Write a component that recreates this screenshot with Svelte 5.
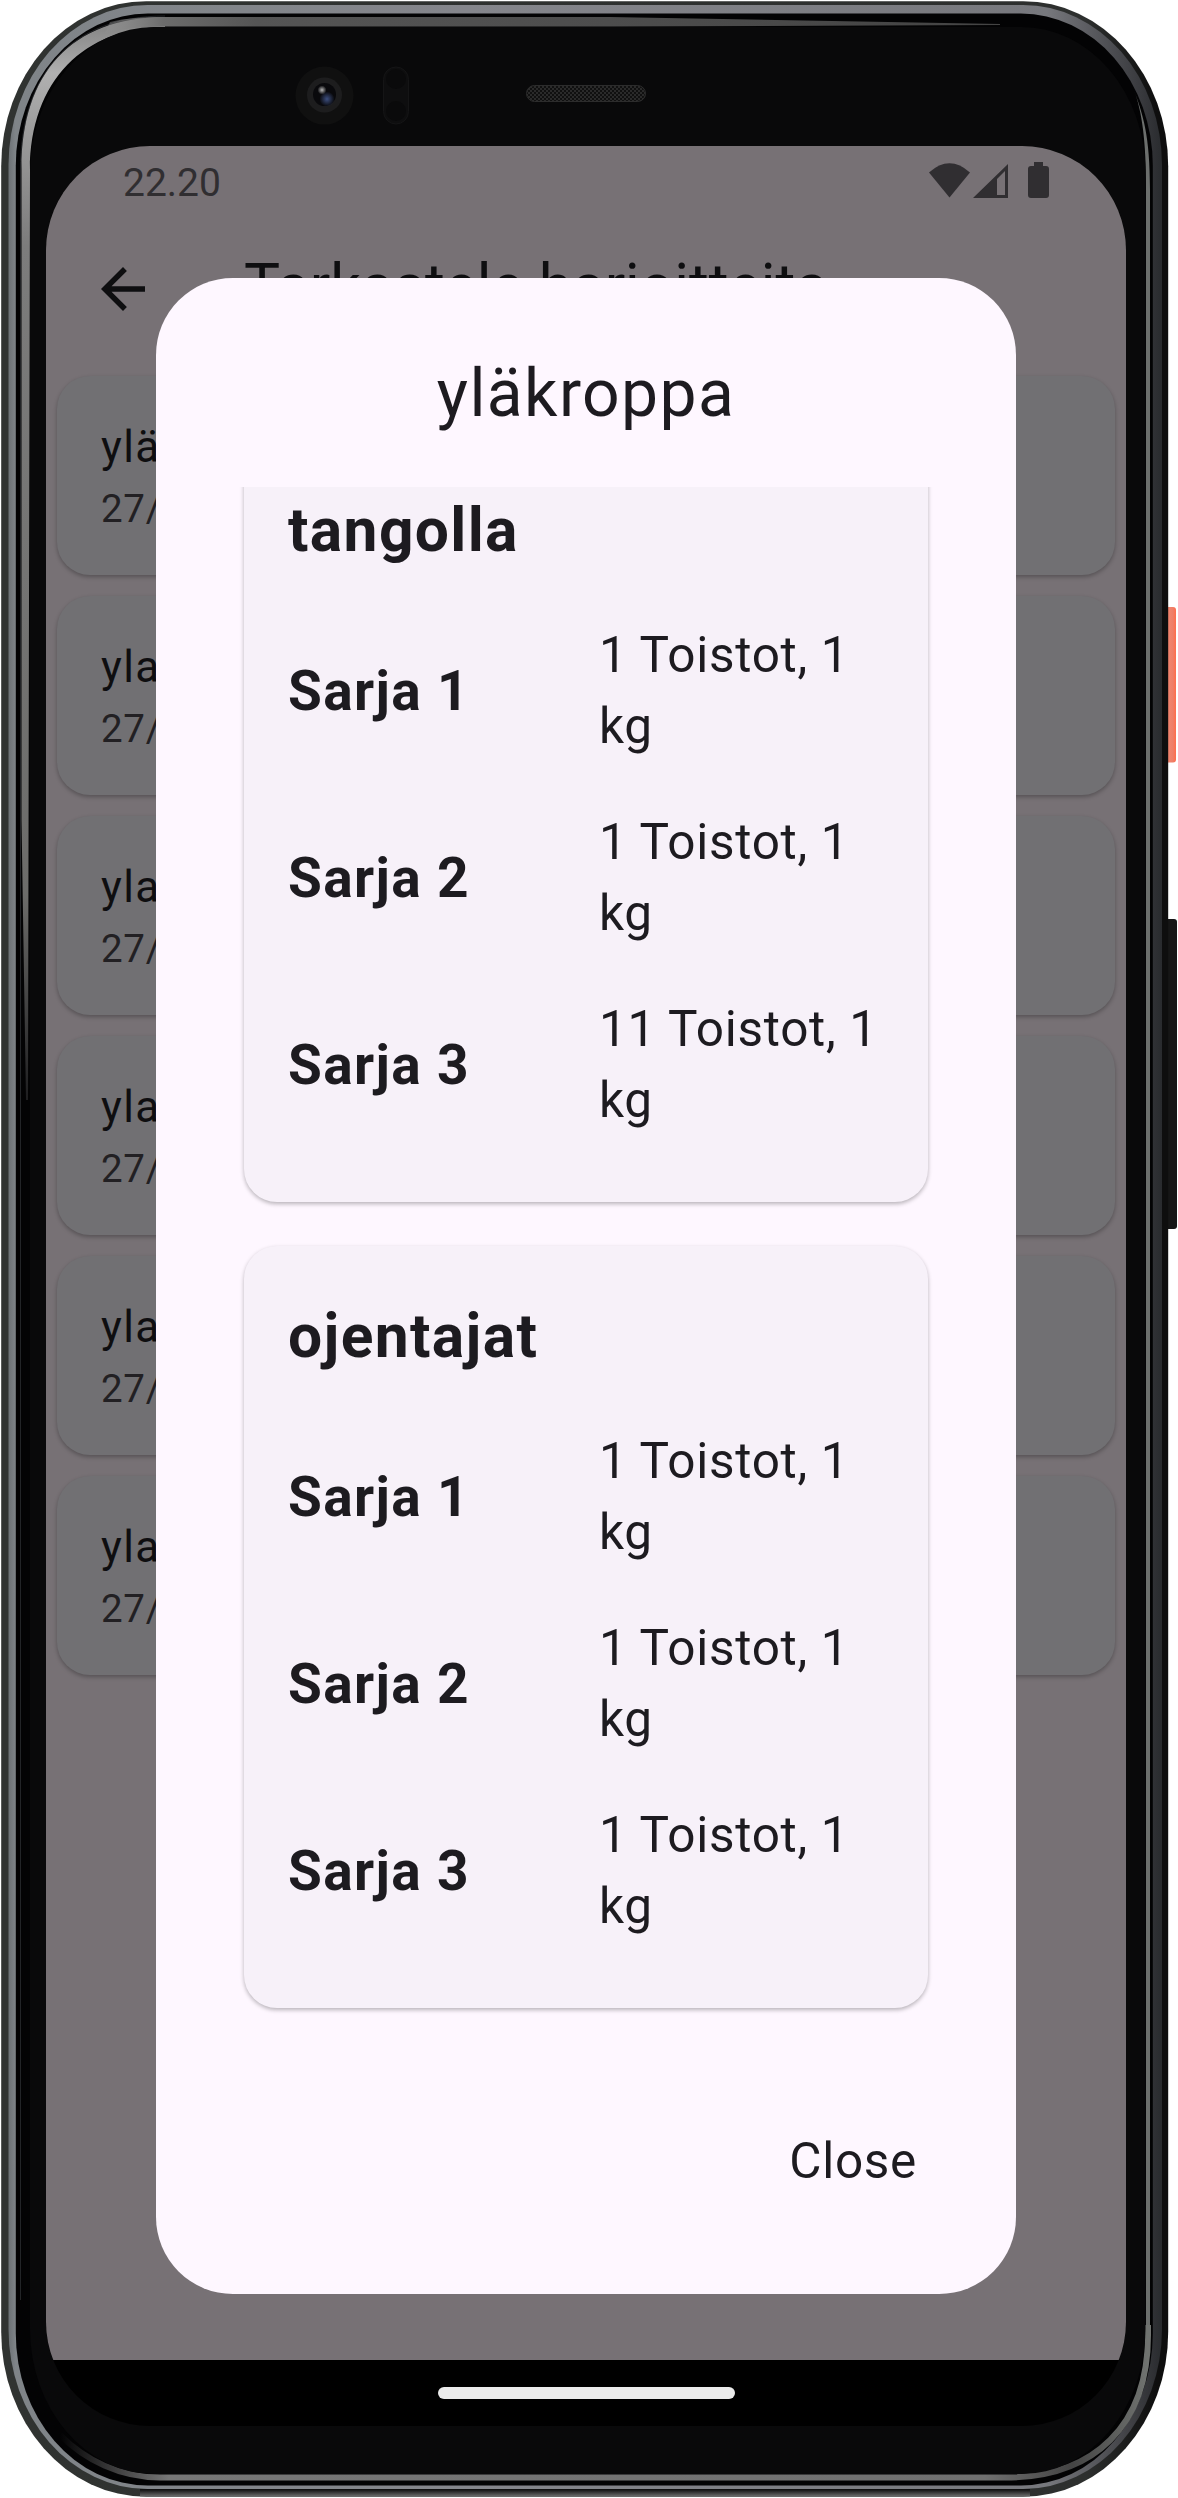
<script>
  const workouts = ['yläkroppa', 'ylakroppa', 'ylakroppa', 'ylakroppa', 'ylakroppa', 'ylakroppa'];
  const exercises = [
    { name: 'tangolla', sets: ['1 Toistot, 1 kg', '1 Toistot, 1 kg', '11 Toistot, 1 kg'] },
    { name: 'ojentajat', sets: ['1 Toistot, 1 kg', '1 Toistot, 1 kg', '1 Toistot, 1 kg'] }
  ];
</script>

<div class="device">
  <svg class="frame" viewBox="0 0 1178 2498" aria-hidden="true">
    <defs>
      <linearGradient id="body" x1="0" y1="0" x2="1" y2="0">
        <stop offset="0" stop-color="#303331" />
        <stop offset=".93" stop-color="#2d2f2e" />
        <stop offset=".99" stop-color="#0e0e0e" />
      </linearGradient>
      <linearGradient id="rail" x1="0" y1="0" x2="1" y2="0">
        <stop offset="0" stop-color="#6c7175" />
        <stop offset=".006" stop-color="#7f8488" />
        <stop offset=".4" stop-color="#85868c" />
        <stop offset=".9" stop-color="#77787d" />
        <stop offset=".98" stop-color="#3a3b3f" />
        <stop offset="1" stop-color="#292b2e" />
      </linearGradient>
      <linearGradient id="shineLeft" gradientUnits="userSpaceOnUse" x1="0" y1="30" x2="0" y2="1110">
        <stop offset="0" stop-color="#8a8a8a" />
        <stop offset=".04" stop-color="#b0b0b0" />
        <stop offset=".1" stop-color="#9a9a9a" />
        <stop offset=".2" stop-color="#7c7c7c" />
        <stop offset=".8" stop-color="#6c6c6a" />
        <stop offset="1" stop-color="#1a1a1c" />
      </linearGradient>
      <linearGradient id="shineTop" gradientUnits="userSpaceOnUse" x1="70" y1="0" x2="1000" y2="0">
        <stop offset="0" stop-color="#aaa" stop-opacity="0" />
        <stop offset=".1" stop-color="#6c6c6c" />
        <stop offset=".2" stop-color="#555" />
        <stop offset="1" stop-color="#444" />
      </linearGradient>
      <linearGradient id="shineBottom" gradientUnits="userSpaceOnUse" x1="60" y1="0" x2="1148" y2="0">
        <stop offset="0" stop-color="#777" stop-opacity="0" />
        <stop offset=".1" stop-color="#777" />
        <stop offset=".85" stop-color="#707070" />
        <stop offset=".93" stop-color="#444" />
        <stop offset="1" stop-color="#707370" />
      </linearGradient>
      <linearGradient id="lip" x1="0" y1="0" x2="0" y2="1">
        <stop offset="0" stop-color="#0a0a0a" />
        <stop offset="1" stop-color="#6e6e6e" />
      </linearGradient>
      <linearGradient id="power" x1="0" y1="0" x2="1" y2="0">
        <stop offset="0" stop-color="#e4694f" />
        <stop offset=".4" stop-color="#f5866f" />
        <stop offset=".8" stop-color="#ee7f68" />
        <stop offset="1" stop-color="#ff6d4c" />
      </linearGradient>
      <radialGradient id="glint"><stop offset="0" stop-color="#b5b5b5" /><stop offset="1" stop-color="#b5b5b5" stop-opacity="0" /></radialGradient>
      <radialGradient id="lens"><stop offset="0" stop-color="#3d4f80" /><stop offset="1" stop-color="#3d4f80" stop-opacity="0" /></radialGradient>
      <pattern id="mesh" width="4" height="4" patternUnits="userSpaceOnUse">
        <rect width="4" height="4" fill="#101010" />
        <circle cx="1" cy="1" r=".8" fill="#4a4a4a" />
        <circle cx="3" cy="3" r=".8" fill="#4a4a4a" />
      </pattern>
    </defs>
    <rect x="1160" y="607" width="16" height="155.500" rx="3" fill="url(#power)" />
    <rect x="1160" y="919" width="17" height="310" rx="3" fill="#161616" />
    <rect x="1.2" y="1.2" width="1167" height="2495.500" rx="145" ry="165" fill="url(#body)" />
    <rect x="140" y="2489" width="890" height="7.500" fill="url(#lip)" />
    <rect x="8.500" y="5" width="1153.500" height="2484" rx="139" ry="160" fill="url(#rail)" />
    <rect x="15.800" y="13.500" width="1137" height="2472" rx="132" ry="152" fill="#030304" />
    <path d="M20.500 2300V170C20.500 75 70 16 165 16" fill="none" stroke="#222427" />
    <path d="M26 1100L21.500 820V170C21 75 70 17 165 17V27C85 27 30 80 30 170L29 600L28 1100Z" fill="url(#shineLeft)" />
    <path d="M110 22C125 18 145 17 165 17H610L1000 24V25L610 26.500H165C140 27 125 28 105 33Z" fill="url(#shineTop)" />
    <path d="M1134 90C1143 115 1150 135 1150 190V2330H1146V190C1146 140 1142 112 1134 90Z" fill="#6c6f6d" />
    <path d="M1148 2325V2335C1148 2425 1095 2477.500 1005 2477.500H160C120 2477.500 85 2460 60 2435" fill="none" stroke="url(#shineBottom)" stroke-width="6" />
    <rect x="30" y="27" width="1115.500" height="2447" rx="124" ry="145" fill="#09090a" />
    <g>
      <circle cx="324.500" cy="95.600" r="29" fill="#101010" />
      <circle cx="324.500" cy="95" r="17.500" fill="#1d1d1e" />
      <circle cx="324.500" cy="94.500" r="11.500" fill="#09090c" />
      <circle cx="327" cy="99" r="7.500" fill="url(#lens)" />
      <circle cx="322" cy="90" r="4.500" fill="url(#glint)" />
      <rect x="383.500" y="67" width="25" height="57" rx="12.500" fill="#0e0e0f" stroke="#151516" />
      <circle cx="396" cy="79" r="10" fill="#0a0a0b" />
      <circle cx="396" cy="111" r="10" fill="#0a0a0b" />
      <rect x="526.500" y="85.500" width="119" height="16" rx="8" fill="url(#mesh)" stroke="#2c2c2c" />
    </g>
  </svg>

  <main class="screen">
    <div class="app">
      <header class="status">
        <span class="time">22.20</span>
        <svg class="indicators" viewBox="0 0 120 36" aria-hidden="true">
          <path d="M0 10.500Q20.500-8 41 10.500L20.500 35.500Z" />
          <path d="M44 36L79 2V36ZM68 17V33H76V9Z" fill-rule="evenodd" />
          <path d="M105 0h9v4h3a3 3 0 0 1 3 3v26a3 3 0 0 1-3 3h-15a3 3 0 0 1-3-3v-26a3 3 0 0 1 3-3h3z" />
        </svg>
      </header>
      <div class="appbar">
        <svg viewBox="0 0 24 24" aria-hidden="true"><path d="M20 11H7.830l5.590-5.590L12 4l-8 8 8 8 1.410-1.410L7.830 13H20v-2z" /></svg>
        <h1>Tarkastele harjoitteita</h1>
      </div>
      <ul class="list">
        {#each workouts as name}
          <li><strong>{name}</strong><span>27/5/2024</span></li>
        {/each}
      </ul>
    </div>
    <footer class="nav"><i></i></footer>

    <section class="dialog">
      <h2>yläkroppa</h2>
      <div class="scroll">
        {#each exercises as ex}
          <article>
            <h3>{ex.name}</h3>
            {#each ex.sets as set, i}
              <div class="set"><b>Sarja {i + 1}</b><span>{set}</span></div>
            {/each}
          </article>
        {/each}
      </div>
      <button>Close</button>
    </section>
  </main>
</div>

<style>
  :global(body) { margin: 0; background: #fff; }
  .device { position: relative; width: 1178px; height: 2498px; overflow: hidden; box-sizing: border-box; padding: 146px 52px 72px 46px; font-family: Roboto, sans-serif; }
  .frame { position: absolute; inset: 0; width: 1178px; height: 2498px; }
  .screen { position: relative; display: flex; flex-direction: column; width: 1080px; height: 2280px; border-radius: 104px; overflow: hidden; background: #000; }
  .app { height: 2214px; background: #777175; }
  .status { display: flex; justify-content: space-between; height: 66px; padding: 15px 77px 0; box-sizing: border-box; }
  .time { font-size: 39px; line-height: 44px; color: #302e31; }
  .indicators { width: 120px; height: 36px; margin-top: 1px; fill: #302e31; overflow: visible; }
  .appbar { display: flex; align-items: center; height: 154px; padding-left: 44px; }
  .appbar svg { width: 66px; height: 66px; fill: #0e0e10; }
  h1 { margin: 0 0 0 88px; padding-bottom: 5px; font-size: 60.5px; font-weight: 400; line-height: 77px; color: #0e0e10; white-space: nowrap; }
  .list { display: flex; flex-direction: column; gap: 21px; list-style: none; margin: 0; padding: 10px 11px; }
  .list li { display: flex; flex-direction: column; box-sizing: border-box; height: 199px; padding: 38px 44px; border-radius: 33px; background: #717073; box-shadow: 0 2px 4px rgba(0, 0, 0, .28); }
  .list strong { font-size: 44px; font-weight: 400; line-height: 66px; letter-spacing: 1.375px; color: #0e0e10; }
  .list span { font-size: 38.5px; line-height: 57px; letter-spacing: .69px; color: #222023; }
  .nav { display: flex; align-items: center; justify-content: center; height: 66px; }
  .nav i { width: 297px; height: 12px; border-radius: 6px; background: #ebebeb; }
  .dialog { position: absolute; left: 110px; top: 132px; display: flex; flex-direction: column; box-sizing: border-box; width: 860px; height: 2016px; padding: 72px 66px 66px; border-radius: 77px; background: #fef7ff; color: #1d1b20; }
  h2 { margin: 0 0 49px; font-size: 66px; font-weight: 400; line-height: 88px; letter-spacing: 1.375px; text-align: center; }
  .scroll { display: flex; flex-direction: column; justify-content: flex-end; gap: 44px; height: 1543px; padding: 0 22px 22px; overflow: hidden; box-sizing: border-box; }
  article { flex: none; box-sizing: border-box; height: 762px; padding: 47px 44px 0; border-radius: 33px; background: #f7f1f9; box-shadow: 0 2px 4px rgba(0, 0, 0, .28); }
  h3 { margin: 0 0 22px; font-size: 60.5px; font-weight: 700; line-height: 88px; letter-spacing: 1.375px; }
  .set { display: grid; grid-template-columns: 311px 285px; align-items: center; height: 187px; }
  b { font-size: 55px; line-height: 78px; letter-spacing: 1.375px; }
  .set span { font-size: 49.5px; line-height: 71px; letter-spacing: .69px; }
  button { align-self: flex-end; margin: 95px 33px 0; padding: 0; border: 0; background: none; font: 400 49.5px/72px Roboto, sans-serif; letter-spacing: .69px; color: #1d1b20; }
</style>
